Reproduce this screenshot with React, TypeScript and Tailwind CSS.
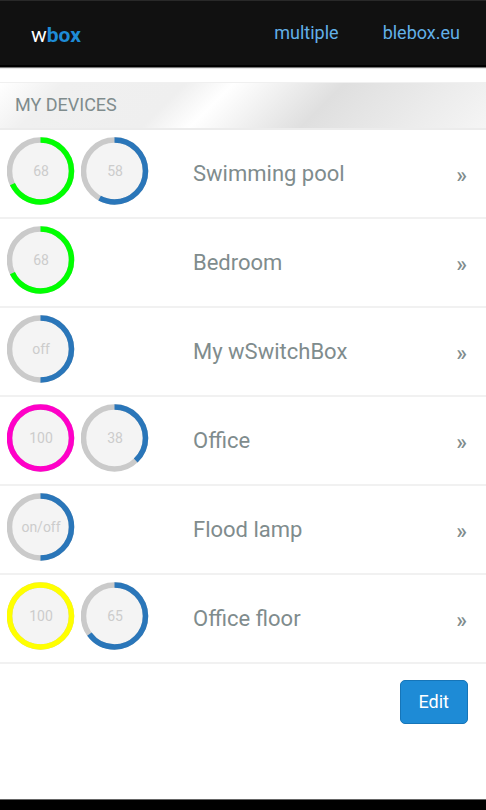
import React from 'react';

interface DialProps {
  value: number;
  label: string;
  color: string;
}

interface Device {
  name: string;
  dials: DialProps[];
}

const BLUE = '#2a76b9';

const devices: Device[] = [
  {
    name: 'Swimming pool',
    dials: [
      { value: 68, label: '68', color: '#00ff00' },
      { value: 58, label: '58', color: BLUE },
    ],
  },
  { name: 'Bedroom', dials: [{ value: 68, label: '68', color: '#00ff00' }] },
  { name: 'My wSwitchBox', dials: [{ value: 50, label: 'off', color: BLUE }] },
  {
    name: 'Office',
    dials: [
      { value: 100, label: '100', color: '#ff00c8' },
      { value: 38, label: '38', color: BLUE },
    ],
  },
  { name: 'Flood lamp', dials: [{ value: 50, label: 'on/off', color: BLUE }] },
  {
    name: 'Office floor',
    dials: [
      { value: 100, label: '100', color: '#ffff00' },
      { value: 65, label: '65', color: BLUE },
    ],
  },
];

const Dial: React.FC<DialProps> = ({ value, label, color }) => (
  <div className="grid size-[68px] place-items-center">
    <svg viewBox="0 0 68 68" className="col-start-1 row-start-1 size-full" aria-hidden="true">
      <circle cx="33.5" cy="34" r="31" fill="#f4f4f4" stroke="#cacaca" strokeWidth="5.5" />
      <circle
        cx="33.5"
        cy="34"
        r="31"
        fill="none"
        stroke={color}
        strokeWidth="5.5"
        pathLength="100"
        strokeDasharray={`${value} 100`}
        transform="rotate(-90 33.5 34)"
      />
    </svg>
    <span className="col-start-1 row-start-1 text-sm text-[#cccccc]">{label}</span>
  </div>
);

const DeviceRow: React.FC<{ device: Device }> = ({ device }) => (
  <li className="border-b-2 border-[#f1f1f1]">
    <a href="#device" className="flex pt-[7px] pr-[19px] pb-3 pl-[7px] text-[#7f8c8d]">
      <div className="flex w-2/5 shrink-0 gap-[6px]">
        {device.dials.map((dial, i) => (
          <Dial key={i} {...dial} />
        ))}
      </div>
      <span className="flex flex-1 items-center pt-1 pl-[2px] text-[22px]">{device.name}</span>
      <span className="flex items-center pt-2 text-[22px] font-medium">»</span>
    </a>
  </li>
);

export default function App() {
  return (
    <div className="flex min-h-screen flex-col bg-white font-[Roboto,sans-serif]">
      <header className="flex items-center justify-between border-t border-b-2 border-t-[#292929] border-b-black bg-[#111111] pt-4 pr-[26px] pb-4 pl-[31px] shadow-[0_1px_1px_#777777]">
        <a href="#home" className="pt-1 text-[21px] leading-7 text-white">
          w<strong className="font-bold text-[#1e8bd6]">box</strong>
        </a>
        <nav className="flex gap-11 text-lg text-[#62b0e8]">
          <a href="#multiple">multiple</a>
          <a href="#blebox">blebox.eu</a>
        </nav>
      </header>

      <main className="flex-1 pt-[15px]">
        <h1 className="border-t border-b-2 border-t-[#f0f0f0] border-b-[#ececec] bg-[linear-gradient(135deg,#ffffff_0%,#f0f0f0_12%,#efefef_35%,#ffffff_44%,#dfdfdf_65%,#f5f5f5_100%)] px-[15px] pt-2 pb-[9px] text-lg leading-7 text-[#7f8c8d]">
          MY DEVICES
        </h1>
        <ul>
          {devices.map((device) => (
            <DeviceRow key={device.name} device={device} />
          ))}
        </ul>
        <div className="flex justify-end px-[18px] py-4">
          <button
            type="button"
            className="rounded-[5px] border border-[#1675b8] bg-[#1e8bd6] px-[18px] py-[7px] text-lg leading-7 text-white"
          >
            Edit
          </button>
        </div>
      </main>

      <footer className="h-[11px] border-t border-[#666666] bg-black" />
    </div>
  );
}
